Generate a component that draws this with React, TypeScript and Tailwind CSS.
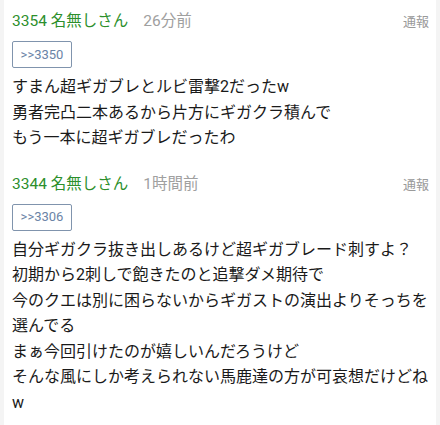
import React from "react";

const font = { fontFamily: '"Roboto", "Noto Sans CJK JP", sans-serif' };

type Post = { no: string; time: string; ref: string; lines: string[] };

const posts: Post[] = [
  {
    no: "3354",
    time: "26分前",
    ref: ">>3350",
    lines: [
      "すまん超ギガブレとルビ雷撃2だったw",
      "勇者完凸二本あるから片方にギガクラ積んで",
      "もう一本に超ギガブレだったわ",
    ],
  },
  {
    no: "3344",
    time: "1時間前",
    ref: ">>3306",
    lines: [
      "自分ギガクラ抜き出しあるけど超ギガブレード刺すよ？",
      "初期から2刺しで飽きたのと追撃ダメ期待で",
      "今のクエは別に困らないからギガストの演出よりそっちを",
      "選んでる",
      "まぁ今回引けたのが嬉しいんだろうけど",
      "そんな風にしか考えられない馬鹿達の方が可哀想だけどね",
      "w",
    ],
  },
];

export default function App() {
  return (
    <div
      className="w-[440px] h-[425px] overflow-hidden bg-[#f4f4f4] px-[4px]"
      style={font}
    >
      <div className="h-full bg-white">
        {posts.map((p) => (
          <div key={p.no} className="pt-[10px] pb-[12px] pl-[8px] pr-[7px]">
            <div className="flex h-6 items-center">
              <span className="text-[15.5px] text-[#2c8f2c]">
                {p.no} 名無しさん
              </span>
              <span className="ml-[15px] text-[15.5px] text-[#a0a0a0]">
                {p.time}
              </span>
              <span className="ml-auto text-[13px] text-[#9a9a9a]">通報</span>
            </div>
            <div className="mt-[7px] flex h-[27px] w-[60px] items-center justify-center rounded-[2px] border border-[#8094ad] text-[13px] text-[#6b84a6]">
              {p.ref}
            </div>
            <div className="mt-[6px] text-[16px] leading-[25.5px] text-[#1a1a1a]">
              {p.lines.map((l, i) => (
                <div key={i} className="whitespace-nowrap">
                  {l}
                </div>
              ))}
            </div>
          </div>
        ))}
      </div>
    </div>
  );
}
